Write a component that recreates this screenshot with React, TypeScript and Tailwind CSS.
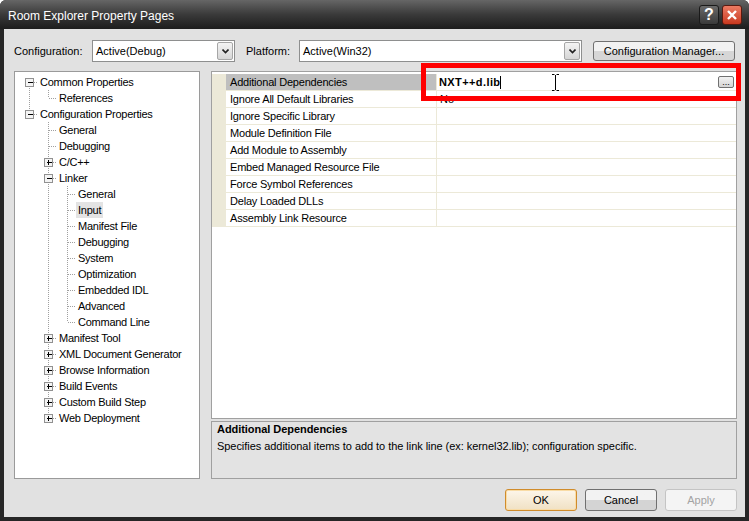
import React from "react";

// Tree rows: level, expander box, last-sibling flag and which ancestor lines continue.
type TreeRow = {
  label: string;
  level: number;
  box?: "+" | "-";
  last?: boolean;
  first?: boolean;
  anc: boolean[];
  selected?: boolean;
};

const tree: TreeRow[] = [
  { label: "Common Properties", level: 0, box: "-", first: true, anc: [] },
  { label: "References", level: 1, last: true, anc: [true] },
  { label: "Configuration Properties", level: 0, box: "-", last: true, anc: [] },
  { label: "General", level: 1, anc: [false] },
  { label: "Debugging", level: 1, anc: [false] },
  { label: "C/C++", level: 1, box: "+", anc: [false] },
  { label: "Linker", level: 1, box: "-", anc: [false] },
  { label: "General", level: 2, anc: [false, true] },
  { label: "Input", level: 2, anc: [false, true], selected: true },
  { label: "Manifest File", level: 2, anc: [false, true] },
  { label: "Debugging", level: 2, anc: [false, true] },
  { label: "System", level: 2, anc: [false, true] },
  { label: "Optimization", level: 2, anc: [false, true] },
  { label: "Embedded IDL", level: 2, anc: [false, true] },
  { label: "Advanced", level: 2, anc: [false, true] },
  { label: "Command Line", level: 2, last: true, anc: [false, true] },
  { label: "Manifest Tool", level: 1, box: "+", anc: [false] },
  { label: "XML Document Generator", level: 1, box: "+", anc: [false] },
  { label: "Browse Information", level: 1, box: "+", anc: [false] },
  { label: "Build Events", level: 1, box: "+", anc: [false] },
  { label: "Custom Build Step", level: 1, box: "+", anc: [false] },
  { label: "Web Deployment", level: 1, box: "+", last: true, anc: [false] },
];

const properties: [string, string][] = [
  ["Additional Dependencies", ""],
  ["Ignore All Default Libraries", "No"],
  ["Ignore Specific Library", ""],
  ["Module Definition File", ""],
  ["Add Module to Assembly", ""],
  ["Embed Managed Resource File", ""],
  ["Force Symbol References", ""],
  ["Delay Loaded DLLs", ""],
  ["Assembly Link Resource", ""],
];

const cx = (level: number) => 14 + 19 * level;

function TreeLines({ row }: { row: TreeRow }) {
  const c = cx(row.level) + 0.5;
  const w = cx(row.level) + 9;
  const dot = { stroke: "#a0a0a0", strokeDasharray: "1 1", shapeRendering: "crispEdges" as const };
  return (
    <svg width={w} height={16} className="shrink-0">
      {row.anc.map((on, a) =>
        on ? <line key={a} x1={cx(a) + 0.5} y1={0} x2={cx(a) + 0.5} y2={16} {...dot} /> : null
      )}
      {!row.first && <line x1={c} y1={0} x2={c} y2={8} {...dot} />}
      {!row.last && <line x1={c} y1={8} x2={c} y2={16} {...dot} />}
      <line x1={c} y1={8.5} x2={c + 8} y2={8.5} {...dot} />
      {row.box && (
        <g shapeRendering="crispEdges">
          <rect x={c - 4} y={4.5} width={8} height={8} fill="#f4f4f4" stroke="#919191" />
          <line x1={c - 2} y1={8.5} x2={c + 3} y2={8.5} stroke="#000" />
          {row.box === "+" && <line x1={c} y1={6} x2={c} y2={11} stroke="#000" />}
        </g>
      )}
    </svg>
  );
}

function Combo({ value, width }: { value: string; width: string }) {
  return (
    <div className={`${width} h-[22px] shrink-0 flex items-center bg-white border border-[#8e8f8f] pl-[3px] pr-[1px]`}>
      <span className="flex-1">{value}</span>
      <div className="w-[16px] h-[18px] flex items-center justify-center rounded-[2px] border border-[#a6a6a6] bg-gradient-to-b from-[#f4f4f4] to-[#d6d6d6]">
        <svg width="7" height="5" viewBox="0 0 7 5">
          <path d="M0.5 0.5 L3.5 3.5 L6.5 0.5" fill="none" stroke="#222" strokeWidth="1.6" />
        </svg>
      </div>
    </div>
  );
}

function Button({ label, kind }: { label: string; kind?: "default" | "disabled" }) {
  const base = "w-[72px] h-[22px] flex items-center justify-center rounded-[3px] border";
  if (kind === "default")
    return (
      <div className={`${base} border-[#d08c2c] bg-gradient-to-b from-[#fdf6ea] to-[#f0e1c4] shadow-[inset_0_0_0_1px_#f9dca6]`}>
        {label}
      </div>
    );
  if (kind === "disabled")
    return <div className={`${base} border-[#c4c4c4] bg-[#f4f4f4] text-[#a3a3a3]`}>{label}</div>;
  return (
    <div className={`${base} border-[#707070] bg-gradient-to-b from-[#f2f2f2] from-50% to-[#d4d4d4] to-50%`}>
      {label}
    </div>
  );
}

export default function App() {
  return (
    <div className="w-[749px] h-[521px] bg-white font-['Liberation_Sans',Arial,sans-serif] text-[11px] text-black">
      <div className="relative w-[749px] h-[521px] flex flex-col bg-[#262626] rounded-t-[6px] overflow-hidden">
        {/* Title bar */}
        <div className="h-[29px] shrink-0 flex items-center justify-between pl-[8px] pr-[7px] bg-gradient-to-b from-[#666666] via-[#3a3a3a] to-[#1d1d1d]">
          <span className="text-[12px] text-white pt-[2px]">Room Explorer Property Pages</span>
          <div className="flex gap-[3px] pt-[1px]">
            <div className="w-[20px] h-[20px] flex items-center justify-center rounded-[3px] border border-[#1a1a1a] bg-gradient-to-b from-[#6a6a6a] to-[#3a3a3a] text-white text-[16px] font-bold leading-none">
              ?
            </div>
            <div className="w-[20px] h-[20px] flex items-center justify-center rounded-[3px] border border-[#5a1a10] bg-gradient-to-b from-[#ec7a62] to-[#c8381e]">
              <svg width="12" height="12" viewBox="0 0 12 12">
                <path d="M2 2 L10 10 M10 2 L2 10" stroke="#fff" strokeWidth="2.4" />
              </svg>
            </div>
          </div>
        </div>

        {/* Client area */}
        <div className="flex-1 mx-[4px] mb-[4px] bg-[#e1e1e1] flex flex-col pl-[10px] pr-[8px] pt-[11px]">
          <div className="flex items-center h-[22px]">
            <span className="w-[78px] shrink-0">Configuration:</span>
            <Combo value="Active(Debug)" width="w-[143px]" />
            <span className="w-[53px] shrink-0 ml-[11px]">Platform:</span>
            <Combo value="Active(Win32)" width="w-[283px]" />
            <div className="ml-[11px] w-[142px] h-[20px] flex items-center justify-center rounded-[3px] border border-[#707070] bg-gradient-to-b from-[#f2f2f2] from-50% to-[#d6d6d6] to-50%">
              Configuration Manager...
            </div>
          </div>

          <div className="mt-[9px] flex gap-[11px] h-[408px]">
            {/* Tree */}
            <div className="w-[186px] shrink-0 bg-white border border-[#9a9a9a] pt-[2px]">
              {tree.map((row, i) => (
                <div key={i} className="flex h-[16px] items-center">
                  <TreeLines row={row} />
                  <span
                    className={`px-[2px] leading-[16px] tracking-[-0.25px] ${row.selected ? "bg-[#e3e3e3]" : ""}`}
                  >
                    {row.label}
                  </span>
                </div>
              ))}
            </div>

            {/* Property grid + description */}
            <div className="flex-1 flex flex-col gap-[2px]">
              <div className="h-[348px] bg-white border border-[#a0a0a0] pt-[2px]">
                {properties.map(([name, value], i) => (
                  <div key={name} className="flex h-[17px] border-b border-[#ece9d8]">
                    <div className="w-[14px] shrink-0 bg-[#ece9d8]" />
                    <div
                      className={`w-[211px] shrink-0 pl-[4px] leading-[16px] tracking-[-0.2px] border-r border-[#ece9d8] ${
                        i === 0 ? "bg-[#bfbfbf]" : ""
                      }`}
                    >
                      {name}
                    </div>
                    {i === 0 ? (
                      <div className="flex-1 flex items-center pl-[2px] pr-[2px] bg-white">
                        <span className="font-bold tracking-[0.4px]">NXT++d.lib</span>
                        <span className="w-[1px] h-[13px] bg-black" />
                        <span className="flex-1" />
                        <div className="w-[16px] h-[12px] flex items-end justify-center rounded-[2px] border border-[#707070] bg-gradient-to-b from-[#f2f2f2] to-[#d4d4d4] text-[9px] leading-[9px]">
                          ...
                        </div>
                      </div>
                    ) : (
                      <div className="flex-1 pl-[3px] leading-[16px]">{value}</div>
                    )}
                  </div>
                ))}
              </div>
              <div className="flex-1 border border-[#a0a0a0] bg-[#e3e3e3] px-[5px] tracking-[-0.05px]">
                <div className="font-bold leading-[14px]">Additional Dependencies</div>
                <div className="leading-[20px]">
                  Specifies additional items to add to the link line (ex: kernel32.lib); configuration specific.
                </div>
              </div>
            </div>
          </div>

          <div className="mt-[10px] flex justify-end gap-[8px]">
            <Button label="OK" kind="default" />
            <Button label="Cancel" />
            <Button label="Apply" kind="disabled" />
          </div>
        </div>

        {/* Red annotation box */}
        <div className="absolute left-[421px] top-[63px] w-[320px] h-[38px] border-[5px] border-[#ff0000]" />

        {/* I-beam cursor */}
        <svg className="absolute left-[551px] top-[73px]" width="9" height="19" viewBox="0 0 9 19">
          <path d="M1 1.5 H3.5 M5.5 1.5 H8 M4.5 2 V17 M1 17.5 H3.5 M5.5 17.5 H8" stroke="#000" strokeWidth="1" fill="none" />
        </svg>
      </div>
    </div>
  );
}
